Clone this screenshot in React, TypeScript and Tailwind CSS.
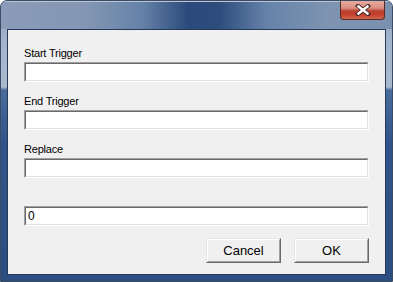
import React from "react";

function Field({ value }: { value?: string }) {
  return (
    <div className="w-[345px] h-[20px] border-t border-l border-t-[#a0a0a0] border-l-[#a0a0a0] border-b border-r border-b-[#ffffff] border-r-[#ffffff]">
      <div className="w-full h-full bg-white border-t border-l border-t-[#696969] border-l-[#696969] border-b border-r border-b-[#e3e3e3] border-r-[#e3e3e3] flex items-center pl-[2px] text-[12px] leading-[14px] text-black font-['Liberation_Sans',Arial,sans-serif]">
        {value}
      </div>
    </div>
  );
}

function Label({ text }: { text: string }) {
  return (
    <div className="h-[13px] text-[11px] leading-[13px] text-black mb-[2px] font-['Liberation_Sans',Arial,sans-serif] tracking-[-0.2px]">
      {text}
    </div>
  );
}

function Btn({ text }: { text: string }) {
  return (
    <div className="w-[75px] h-[25px] border border-t-[#e3e3e3] border-l-[#e3e3e3] border-b-[#696969] border-r-[#696969]">
      <div className="w-full h-full bg-[#f0f0f0] border border-t-[#ffffff] border-l-[#ffffff] border-b-[#a0a0a0] border-r-[#a0a0a0] flex items-center justify-center text-[13px] text-black font-['Liberation_Sans',Arial,sans-serif]">
        {text}
      </div>
    </div>
  );
}

export default function App() {
  return (
    <div className="w-[393px] h-[282px] bg-white">
      <div className="relative w-[393px] h-[282px] rounded-t-[7px] border border-[#3a4b63] overflow-hidden flex flex-col bg-[linear-gradient(180deg,#8ea2bf_0px,#a3b5cc_40px,#a9bacf_86px,#4a6c9c_89px,#30548a_140px,#2c4d80_100%)]">
        <div className="h-[28px] shrink-0 relative bg-[linear-gradient(90deg,#8a9cb7_0%,#8396b3_22%,#6582a8_36%,#2b4a7b_48%,#2e4d7d_56%,#6583a9_68%,#7f94b1_84%,#7990ae_100%)]">
          <div className="absolute inset-x-0 top-0 h-[1px] bg-[#b9c7d8]" />
          <div className="absolute right-[7px] top-0 w-[45px] h-[19px] rounded-b-[4px] border border-t-0 border-[#5b2a24] overflow-hidden bg-[linear-gradient(180deg,#e6aa9f_0%,#d98d80_40%,#b9412f_55%,#c2402c_75%,#d0684f_100%)] flex items-center justify-center">
            <svg width="16" height="12" viewBox="0 0 16 12">
              <path d="M3 2 L13 10 M13 2 L3 10" stroke="#4a2a2a" strokeWidth="4.2" strokeLinecap="square" />
              <path d="M3.5 2.5 L12.5 9.5 M12.5 2.5 L3.5 9.5" stroke="#ffffff" strokeWidth="2.4" strokeLinecap="square" />
            </svg>
          </div>
        </div>
        <div className="mx-[6px] h-[246px] border border-[#25395a] bg-[#f0f0f0] pl-[16px] pt-[17px] flex flex-col">
          <Label text="Start Trigger" />
          <Field />
          <div className="h-[13px]" />
          <Label text="End Trigger" />
          <Field />
          <div className="h-[13px]" />
          <Label text="Replace" />
          <Field />
          <div className="h-[13px]" />
          <Label text="" />
          <Field value="0" />
          <div className="flex gap-[13px] mt-[12px] ml-[182px]">
            <Btn text="Cancel" />
            <Btn text="OK" />
          </div>
        </div>
      </div>
    </div>
  );
}
